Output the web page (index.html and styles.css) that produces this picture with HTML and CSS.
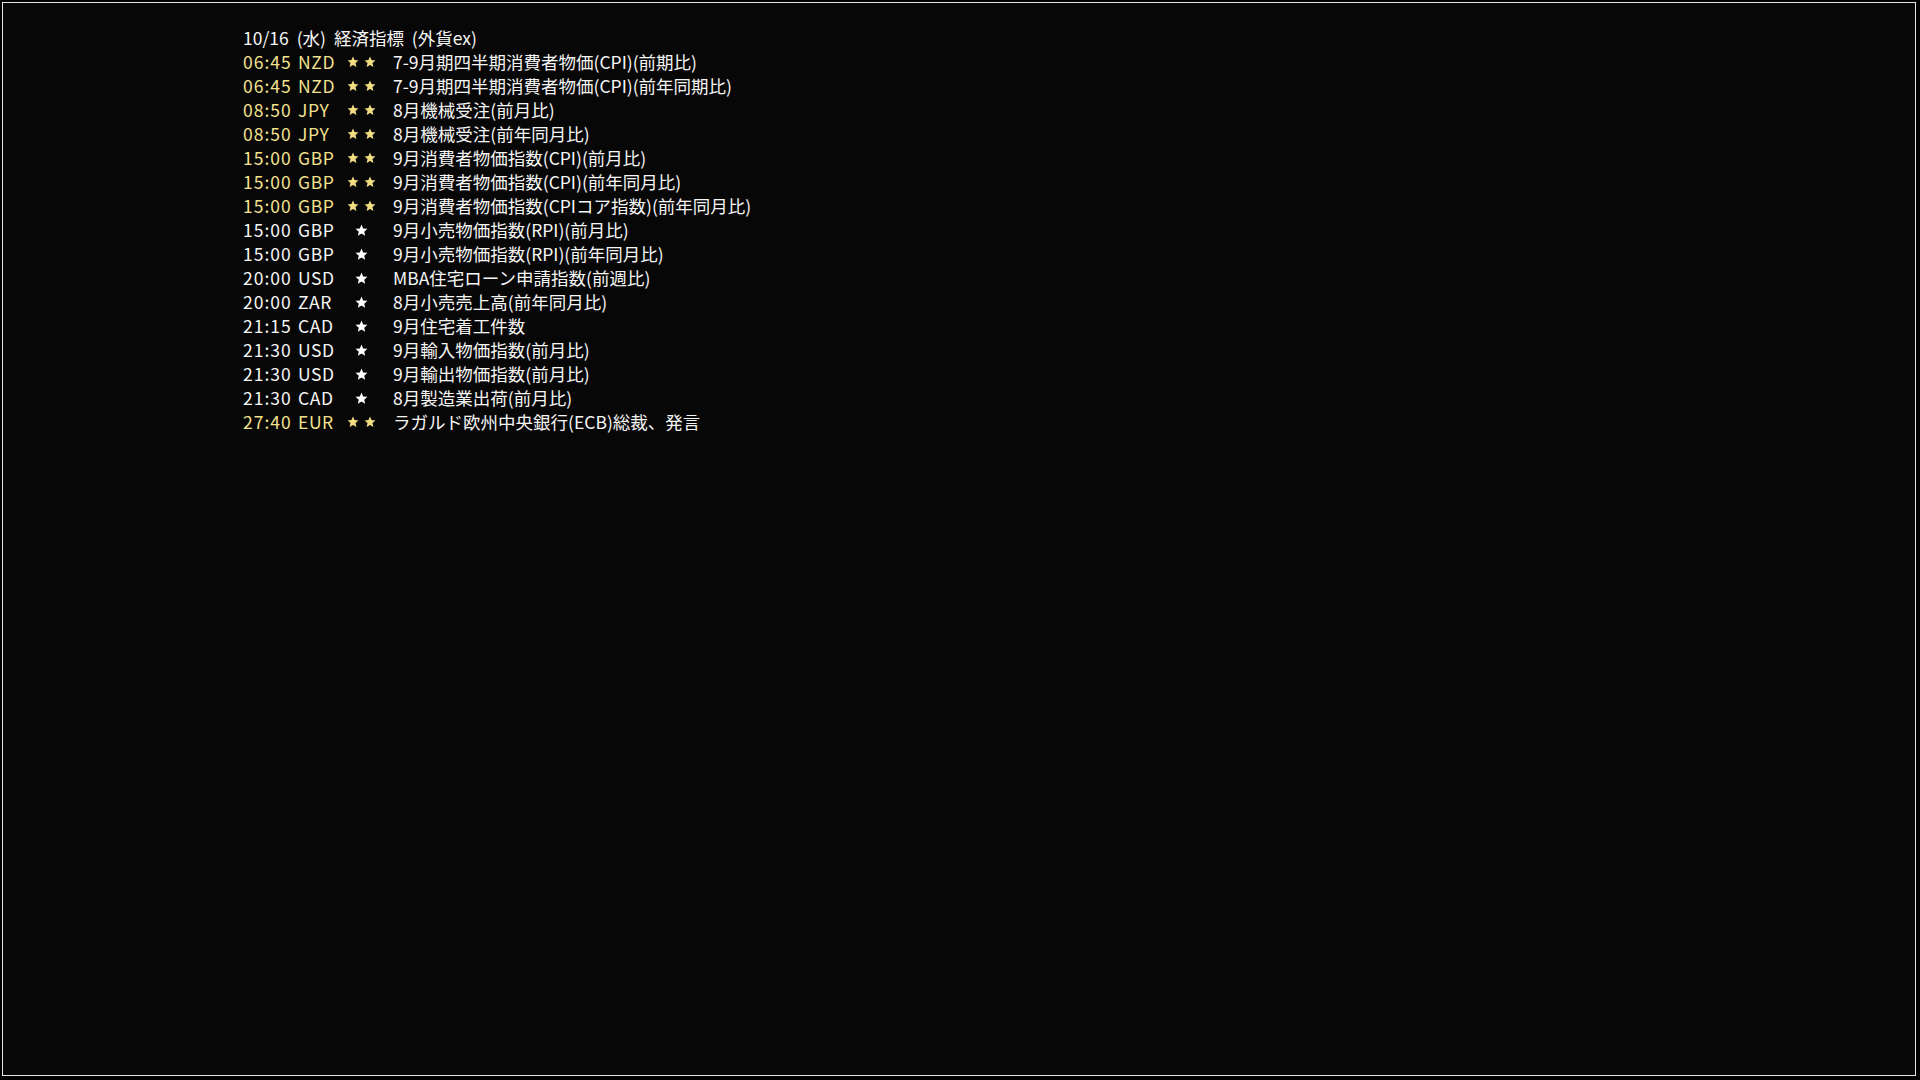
FILE: index.html
```html
<!DOCTYPE html>
<html lang="ja">
<head>
<meta charset="utf-8">
<title>経済指標</title>
<link rel="stylesheet" href="styles.css">
</head>
<body>
<svg class="defs" width="0" height="0" aria-hidden="true">
  <defs>
    <polygon id="star" points="50,4 62.93,34.2 95.65,37.17 70.92,58.8 78.21,90.83 50,74 21.79,90.83 29.08,58.8 4.35,37.17 37.07,34.2"/>
  </defs>
</svg>
<div class="frame">
  <div class="list">
    <div class="title">10/16 (水) 経済指標 (外貨ex)</div>

    <div class="row hi"><span class="time">06:45</span><span class="cur">NZD</span><span class="stars two"><svg viewBox="0 0 100 100"><use href="#star"/></svg><svg viewBox="0 0 100 100"><use href="#star"/></svg></span><span class="desc">7-9月期四半期消費者物価(CPI)(前期比)</span></div>
    <div class="row hi"><span class="time">06:45</span><span class="cur">NZD</span><span class="stars two"><svg viewBox="0 0 100 100"><use href="#star"/></svg><svg viewBox="0 0 100 100"><use href="#star"/></svg></span><span class="desc">7-9月期四半期消費者物価(CPI)(前年同期比)</span></div>
    <div class="row hi"><span class="time">08:50</span><span class="cur">JPY</span><span class="stars two"><svg viewBox="0 0 100 100"><use href="#star"/></svg><svg viewBox="0 0 100 100"><use href="#star"/></svg></span><span class="desc">8月機械受注(前月比)</span></div>
    <div class="row hi"><span class="time">08:50</span><span class="cur">JPY</span><span class="stars two"><svg viewBox="0 0 100 100"><use href="#star"/></svg><svg viewBox="0 0 100 100"><use href="#star"/></svg></span><span class="desc">8月機械受注(前年同月比)</span></div>
    <div class="row hi"><span class="time">15:00</span><span class="cur">GBP</span><span class="stars two"><svg viewBox="0 0 100 100"><use href="#star"/></svg><svg viewBox="0 0 100 100"><use href="#star"/></svg></span><span class="desc">9月消費者物価指数(CPI)(前月比)</span></div>
    <div class="row hi"><span class="time">15:00</span><span class="cur">GBP</span><span class="stars two"><svg viewBox="0 0 100 100"><use href="#star"/></svg><svg viewBox="0 0 100 100"><use href="#star"/></svg></span><span class="desc">9月消費者物価指数(CPI)(前年同月比)</span></div>
    <div class="row hi"><span class="time">15:00</span><span class="cur">GBP</span><span class="stars two"><svg viewBox="0 0 100 100"><use href="#star"/></svg><svg viewBox="0 0 100 100"><use href="#star"/></svg></span><span class="desc">9月消費者物価指数(CPIコア指数)(前年同月比)</span></div>
    <div class="row"><span class="time">15:00</span><span class="cur">GBP</span><span class="stars one"><svg viewBox="0 0 100 100"><use href="#star"/></svg></span><span class="desc">9月小売物価指数(RPI)(前月比)</span></div>
    <div class="row"><span class="time">15:00</span><span class="cur">GBP</span><span class="stars one"><svg viewBox="0 0 100 100"><use href="#star"/></svg></span><span class="desc">9月小売物価指数(RPI)(前年同月比)</span></div>
    <div class="row"><span class="time">20:00</span><span class="cur">USD</span><span class="stars one"><svg viewBox="0 0 100 100"><use href="#star"/></svg></span><span class="desc">MBA住宅ローン申請指数(前週比)</span></div>
    <div class="row"><span class="time">20:00</span><span class="cur">ZAR</span><span class="stars one"><svg viewBox="0 0 100 100"><use href="#star"/></svg></span><span class="desc">8月小売売上高(前年同月比)</span></div>
    <div class="row"><span class="time">21:15</span><span class="cur">CAD</span><span class="stars one"><svg viewBox="0 0 100 100"><use href="#star"/></svg></span><span class="desc">9月住宅着工件数</span></div>
    <div class="row"><span class="time">21:30</span><span class="cur">USD</span><span class="stars one"><svg viewBox="0 0 100 100"><use href="#star"/></svg></span><span class="desc">9月輸入物価指数(前月比)</span></div>
    <div class="row"><span class="time">21:30</span><span class="cur">USD</span><span class="stars one"><svg viewBox="0 0 100 100"><use href="#star"/></svg></span><span class="desc">9月輸出物価指数(前月比)</span></div>
    <div class="row"><span class="time">21:30</span><span class="cur">CAD</span><span class="stars one"><svg viewBox="0 0 100 100"><use href="#star"/></svg></span><span class="desc">8月製造業出荷(前月比)</span></div>
    <div class="row hi"><span class="time">27:40</span><span class="cur">EUR</span><span class="stars two"><svg viewBox="0 0 100 100"><use href="#star"/></svg><svg viewBox="0 0 100 100"><use href="#star"/></svg></span><span class="desc">ラガルド欧州中央銀行(ECB)総裁、発言</span></div>
  </div>
</div>
</body>
</html>
```

FILE: styles.css
```css
html, body {
  margin: 0;
  padding: 0;
  background: #000;
}

.defs {
  position: absolute;
  width: 0;
  height: 0;
  overflow: hidden;
}

.frame {
  margin: 2px;
  width: 1912px;
  height: 1072px;
  border: 1px solid #e6e6e6;
  background: #070707;
  box-sizing: content-box;
  overflow: hidden;
}

.list {
  padding: 23px 0 0 240px;
  font-family: "Noto Sans CJK JP", "Noto Sans", sans-serif;
  font-size: 17.5px;
  line-height: 24px;
  color: #f6f6f6;
}

.title {
  height: 24px;
  white-space: nowrap;
  word-spacing: 4px;
}

.row {
  display: grid;
  grid-template-columns: 55px 40px 46px auto;
  align-items: center;
  height: 24px;
  white-space: nowrap;
}

.time {
  letter-spacing: 1px;
}

.cur {
  letter-spacing: 0.6px;
}

.row.hi .time,
.row.hi .cur {
  color: #f3e28e;
}

.desc {
  padding-left: 9px;
}

.stars {
  display: flex;
  justify-content: center;
  align-items: center;
}

.stars svg {
  display: block;
  fill: #ffffff;
}

.stars.one svg {
  width: 13px;
  height: 13px;
}

.stars.two {
  gap: 5px;
}

.stars.two svg {
  width: 12px;
  height: 12px;
  fill: #f0dd82;
}
```
